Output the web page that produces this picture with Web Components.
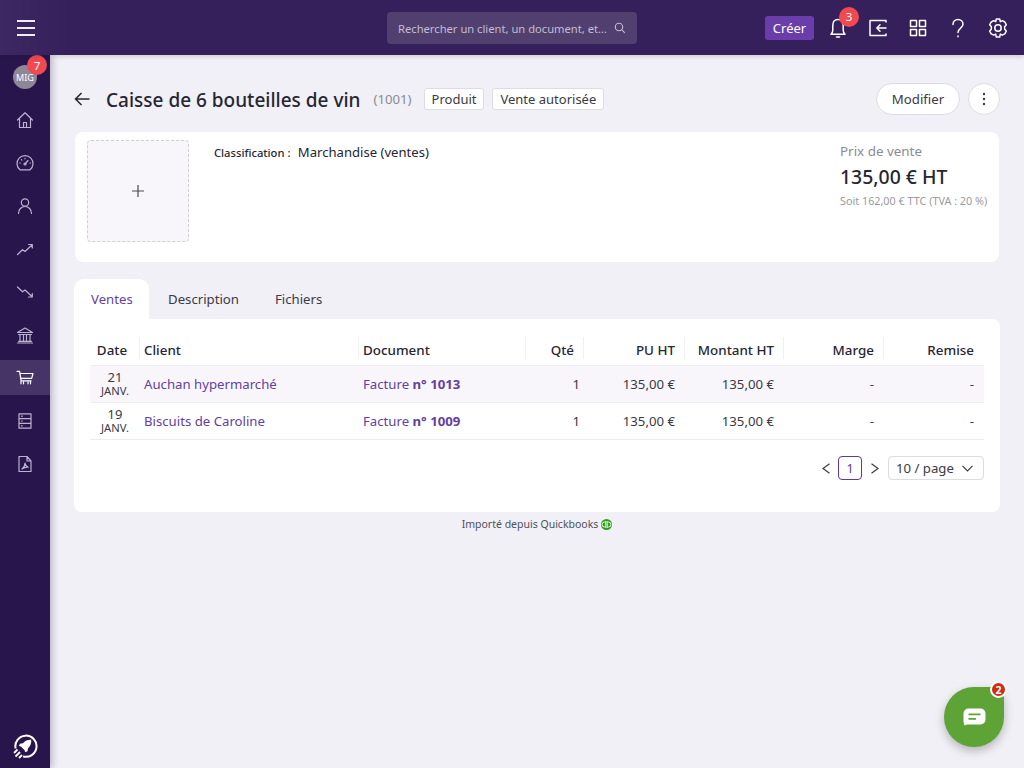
<!DOCTYPE html>
<html lang="fr">
<head>
<meta charset="utf-8">
<title>Caisse de 6 bouteilles de vin</title>
<style>
  html, body { margin: 0; height: 100%; }
  body {
    font-family: "Noto Sans", "Open Sans", sans-serif;
    color: #262632;
    background: #f0f0f6;
    overflow: hidden;
  }
  app-shell { width: 1024px; height: 768px; }
</style>
</head>
<body>
<app-shell>
  <app-topbar slot="top"></app-topbar>
  <app-sidebar slot="side"></app-sidebar>
  <page-header></page-header>
  <product-card></product-card>
  <product-tabs>
    <sales-table></sales-table>
  </product-tabs>
  <import-note></import-note>
  <chat-fab slot="over"></chat-fab>
</app-shell>

<script>
// Font stack shared by all the shadow roots
const FONT = `"Noto Sans", "Open Sans", sans-serif`;

class AppShell extends HTMLElement {
  constructor() {
    super();
    this.attachShadow({ mode: "open" });
    this.shadowRoot.innerHTML = `
      <style>
        :host {
          display: grid;
          grid-template-columns: 50px 1fr;
          grid-template-rows: 55px 1fr;
          position: relative;
          overflow: hidden;
        }
        .top { grid-column: 1 / 3; z-index: 3; }
        .side { z-index: 2; min-height: 0; }
        main { padding: 28px 24px 0 24px; min-width: 0; }
      </style>
      <div class="top"><slot name="top"></slot></div>
      <div class="side"><slot name="side"></slot></div>
      <main><slot></slot></main>
      <slot name="over"></slot>
    `;
  }
}

class AppTopbar extends HTMLElement {
  constructor() {
    super();
    this.attachShadow({ mode: "open" });
    this.shadowRoot.innerHTML = `
      <style>
        :host {
          display: flex;
          align-items: center;
          height: 55px;
          background: linear-gradient(90deg, #3e2864, #35205b 70px);
          box-shadow: 0 2px 4px rgba(40, 30, 70, 0.15);
          font-family: ${FONT};
          position: relative;
        }
        .burger {
          width: 52px;
          height: 55px;
          flex: none;
          display: flex;
          align-items: center;
          justify-content: center;
        }
        .search {
          position: absolute;
          left: 387px;
          top: 12px;
          width: 250px;
          height: 32px;
          border-radius: 4px;
          background: #51406f;
          color: #c4bccf;
          font-size: 11.2px;
          display: flex;
          align-items: center;
          padding: 0 11px;
          box-sizing: border-box;
          white-space: nowrap;
        }
        .search span { flex: 1; }
        .right {
          margin-left: auto;
          display: flex;
          align-items: center;
          padding-right: 15px;
        }
        .create {
          background: #6a3eaa;
          color: #fff;
          font-size: 13px;
          height: 24px;
          width: 49px;
          display: flex;
          align-items: center;
          justify-content: center;
          border-radius: 3px;
          margin-right: 13px;
        }
        .icon { width: 22px; height: 24px; display: block; }
        .bell { position: relative; width: 24px; height: 24px; margin-right: 16px; }
        .badge {
          position: absolute;
          left: 12px;
          top: -9px;
          width: 20px;
          height: 20px;
          border-radius: 50%;
          background: #f1494f;
          color: #fff;
          font-size: 11.5px;
          display: flex;
          align-items: center;
          justify-content: center;
        }
        .right svg { fill: none; stroke: #fff; stroke-width: 1.5; stroke-linecap: round; stroke-linejoin: round; }
        .gap { margin-right: 18px; }
      </style>
      <div class="burger">
        <svg width="18" height="16" viewBox="0 0 18 16"><path d="M0 1h18M0 8h18M0 15h18" stroke="#f1edf6" stroke-width="2"/></svg>
      </div>
      <div class="search">
        <span>Rechercher un client, un document, et...</span>
        <svg width="12" height="12" viewBox="0 0 12 12" fill="none" stroke="#c4bccf" stroke-width="1.1"><circle cx="5" cy="5" r="3.7"/><path d="M7.8 7.8l3 3"/></svg>
      </div>
      <div class="right">
        <div class="create">Créer</div>
        <div class="bell">
          <svg class="icon" viewBox="0 0 22 24"><path d="M11 3.5c-3.5 0-5.2 2.7-5.2 5.8v5c0 1.6-.8 3-1.8 3.900h14c-1-.9-1.800-2.300-1.800-3.900v-5c0-3.100-1.700-5.800-5.200-5.800zM9.500 21h3"/></svg>
          <div class="badge">3</div>
        </div>
        <svg class="icon gap" viewBox="0 0 22 24"><path d="M19 6V4.500H3v15h16V18M19 12H10M13 8.800L9.800 12l3.200 3.200"/></svg>
        <svg class="icon gap" viewBox="0 0 22 24"><path d="M3.500 4.500h6v6h-6zM12.500 4.500h6v6h-6zM3.500 13.500h6v6h-6zM12.500 13.500h6v6h-6z"/></svg>
        <svg class="icon gap" viewBox="0 0 22 24"><path d="M6 8.500c0-3 2.200-5 5-5s5 2 5 4.700c0 3.800-5 4-5 8.300M11 20v.8"/></svg>
        <svg class="icon" viewBox="0 0 22 24"><circle cx="11" cy="12" r="3.200"/><path d="M9.300 3h3.400l.6 2.700 2-1 2.500 1.300 1.500 2.700-1.700 2 .1 2.600 1.600 1.800-1.500 2.800-2.500 1.200-2-1-.6 2.900H9.300l-.6-2.900-2 1-2.500-1.200-1.500-2.800 1.600-1.800.1-2.600-1.700-2L4.200 6l2.500-1.300 2 1z"/></svg>
      </div>
    `;
  }
}

class AppSidebar extends HTMLElement {
  constructor() {
    super();
    this.attachShadow({ mode: "open" });
    const icons = [
      `<path d="M2.500 10L10 2.800 17.500 10M4.500 8.500V17.500h11V8.500M8.500 17.500v-5h3v5"/>`,
      `<path d="M5 16.800a8 8 0 1 1 10 0zM10 11l3-3.500M4.800 10h.5M10 5.300v.5M15 10h.5M6.500 6.700l.4.4"/><circle cx="10" cy="11" r="1"/>`,
      `<circle cx="10" cy="6.500" r="3.700"/><path d="M3.500 17.500c0-4 2.800-7 6.500-7s6.500 3 6.500 7"/>`,
      `<path d="M2.500 15.500l5-4.800 2.500 1.800 7-6.500M13.500 5.500h3.800v3.500"/>`,
      `<path d="M2.500 5l5 4.800L10 8l7 6.500M13.500 15h3.800v-3.500"/>`,
      `<path d="M2.500 7.500L10 3l7.500 4.500zM3.500 9.500h13M5 10v6M8.500 10v6M11.500 10v6M15 10v6M3.500 16.300h13M2.500 18h15"/>`,
      `<path d="M2 3.300h2.600l1.500 9.500h10M5 5.500h13l-1.300 4.800H5.800M6 13v2.800M8.500 14v1.800M13 14v1.800M15.500 13v2.800"/>`,
      `<path d="M4 2.800h12v14.400H4zM4 7.600h12M4 12.400h12M6.500 5.200h.8M6.500 10h.8M6.500 14.800h.8"/>`,
      `<path d="M4 2.500h8l4 4.500v10.500H4zM12 2.500V7h4M7 15c2-1.500 3-4 3-6 .4 2.500 1.500 3.600 3.200 4.200-2.200-.2-4.200.4-6.200 1.800z"/>`,
    ];
    const items = icons.map((p, i) => `
      <div class="item ${i === 6 ? "active" : ""}">
        <svg width="20" height="20" viewBox="0 0 20 20">${p}</svg>
      </div>`).join("");
    this.shadowRoot.innerHTML = `
      <style>
        :host {
          display: flex;
          flex-direction: column;
          align-items: stretch;
          width: 50px;
          height: 713px;
          background: #27154b;
          box-shadow: 2px 0 7px rgba(40, 30, 70, 0.3);
          font-family: ${FONT};
          position: relative;
        }
        .avatar-wrap { height: 43px; display: flex; justify-content: center; padding-top: 10px; box-sizing: border-box; }
        .avatar {
          width: 24px;
          height: 24px;
          border-radius: 50%;
          background: #8e8799;
          color: #fff;
          font-size: 9px;
          display: flex;
          align-items: center;
          justify-content: center;
          position: relative;
        }
        .count {
          position: absolute;
          left: 14px;
          top: -10px;
          width: 20px;
          height: 20px;
          border-radius: 50%;
          background: #f1494f;
          color: #fff;
          font-size: 11.500px;
          display: flex;
          align-items: center;
          justify-content: center;
        }
        .item {
          height: 43px;
          display: flex;
          align-items: center;
          justify-content: center;
        }
        .item svg { fill: none; stroke: #bdb2d1; stroke-width: 1.2; stroke-linecap: round; stroke-linejoin: round; }
        .item.active { background: #473467; height: 35px; margin: 4px 0; }
        .item.active svg { stroke: #fff; }
        .rocket { margin-top: auto; height: 35px; display: flex; justify-content: center; }
      </style>
      <div class="avatar-wrap"><div class="avatar">MIG<div class="count">7</div></div></div>
      ${items}
      <div class="rocket">
        <svg width="26" height="26" viewBox="0 0 26 26" fill="none">
          <path d="M3.600 15.500A10.600 10.600 0 1 1 11 23.400" stroke="#fff" stroke-width="2"/>
          <path d="M19.200 6.800c.4 3.600-.8 6.300-3.200 8.500l-.5 3-2.300 1-.6-2-3.700-3.700-2-.6 1-2.300 3-.5c2.200-2.400 4.900-3.600 8.300-3.400z" fill="#fff"/>
          <path d="M2 20l3.500-3.500M3.500 23.500l4.500-4.500M7 25l3-3" stroke="#fff" stroke-width="1.800"/>
        </svg>
      </div>
    `;
  }
}

class PageHeader extends HTMLElement {
  constructor() {
    super();
    this.attachShadow({ mode: "open" });
    this.shadowRoot.innerHTML = `
      <style>
        :host {
          display: flex;
          align-items: center;
          height: 32px;
          font-family: ${FONT};
          color: #262632;
        }
        .back { margin-right: 15px; flex: none; display: block; }
        h1 { font-size: 19px; font-weight: 500; margin: 1px 13px 0 0; white-space: nowrap; }
        .ref { font-size: 13.200px; color: #8b8b94; margin-right: 12px; }
        .tag {
          font-size: 13px;
          height: 22px;
          box-sizing: border-box;
          display: flex;
          align-items: center;
          padding: 0 7px;
          background: #fff;
          border: 1px solid #dcdce2;
          border-radius: 3px;
          margin-right: 8px;
          color: #3a3a44;
        }
        .actions { margin-left: auto; display: flex; gap: 8px; }
        button {
          font: inherit;
          font-size: 13.200px;
          height: 32px;
          border: 1px solid #dcdce2;
          background: #fff;
          color: #3a3a44;
          border-radius: 16px;
          padding: 0;
          display: flex;
          align-items: center;
          justify-content: center;
        }
        .edit { width: 84px; }
        .more { width: 32px; }
      </style>
      <svg class="back" width="17" height="16" viewBox="0 0 17 16" fill="none" stroke="#262632" stroke-width="1.500"><path d="M15.500 8H1.500M7.500 2l-6 6 6 6"/></svg>
      <h1>Caisse de 6 bouteilles de vin</h1>
      <span class="ref">(1001)</span>
      <span class="tag">Produit</span>
      <span class="tag">Vente autorisée</span>
      <div class="actions">
        <button class="edit">Modifier</button>
        <button class="more"><svg width="4" height="14" viewBox="0 0 4 14" fill="#3a3a44"><circle cx="2" cy="2" r="1.200"/><circle cx="2" cy="7" r="1.200"/><circle cx="2" cy="12" r="1.200"/></svg></button>
      </div>
    `;
  }
}

class ProductCard extends HTMLElement {
  constructor() {
    super();
    this.attachShadow({ mode: "open" });
    this.shadowRoot.innerHTML = `
      <style>
        :host {
          display: flex;
          height: 130px;
          width: 924px;
          margin: 17px 0 0 1px;
          padding: 8px 12px;
          box-sizing: border-box;
          background: #fff;
          border-radius: 8px;
          font-family: ${FONT};
          color: #262632;
        }
        .pic {
          width: 102px;
          height: 102px;
          flex: none;
          box-sizing: border-box;
          border: 1px dashed #cfcfd6;
          border-radius: 4px;
          background: #f8f6fb;
          display: flex;
          align-items: center;
          justify-content: center;
        }
        .info { flex: 1; padding: 4px 0 0 25px; font-size: 13.100px; line-height: 17px; }
        .info b { font-size: 11.200px; font-weight: 500; margin-right: 4px; }
        .price { width: 147px; flex: none; }
        .label { font-size: 13.400px; color: #8b8b94; margin-top: 3px; line-height: 17px; }
        .amount { font-size: 19.400px; font-weight: 500; line-height: 26px; margin-top: 4px; white-space: nowrap; }
        .vat { font-size: 10.800px; color: #9a9aa2; margin-top: 4px; white-space: nowrap; line-height: 14px; }
      </style>
      <div class="pic"><svg width="12" height="12" viewBox="0 0 12 12" stroke="#4a4a54" stroke-width="1.200"><path d="M6 0v12M0 6h12"/></svg></div>
      <div class="info"><b>Classification :</b> Marchandise (ventes)</div>
      <div class="price">
        <div class="label">Prix de vente</div>
        <div class="amount">135,00 € HT</div>
        <div class="vat">Soit 162,00 € TTC (TVA : 20 %)</div>
      </div>
    `;
  }
}

class ProductTabs extends HTMLElement {
  constructor() {
    super();
    this.attachShadow({ mode: "open" });
    this.shadowRoot.innerHTML = `
      <style>
        :host {
          display: block;
          width: 926px;
          margin-top: 17px;
          font-family: ${FONT};
        }
        nav { display: flex; height: 40px; font-size: 13.200px; color: #3a3a44; }
        .tab { display: flex; align-items: center; padding: 0 18px; }
        .tab.on { background: #fff; color: #63409f; border-radius: 10px 10px 0 0; width: 75px; padding: 0 0 0 17px; box-sizing: border-box; margin-right: 1px; }
        .panel { background: #fff; border-radius: 0 8px 8px 8px; height: 193px; padding: 12px 16px 0 16px; box-sizing: border-box; }
      </style>
      <nav>
        <div class="tab on">Ventes</div>
        <div class="tab">Description</div>
        <div class="tab">Fichiers</div>
      </nav>
      <div class="panel"><slot></slot></div>
    `;
  }
}

class SalesTable extends HTMLElement {
  constructor() {
    super();
    this.attachShadow({ mode: "open" });
    const rows = [
      ["21", "Auchan hypermarché", "1013"],
      ["19", "Biscuits de Caroline", "1009"],
    ];
    const body = rows.map(r => `
      <tr>
        <td class="date"><div>${r[0]}</div><small>JANV.</small></td>
        <td class="link">${r[1]}</td>
        <td class="link">Facture <b>n° ${r[2]}</b></td>
        <td class="num qty">1</td>
        <td class="num">135,00 €</td>
        <td class="num">135,00 €</td>
        <td class="num">-</td>
        <td class="num">-</td>
      </tr>`).join("");
    this.shadowRoot.innerHTML = `
      <style>
        :host { display: block; font-family: ${FONT}; color: #3a3a44; }
        table { border-collapse: collapse; table-layout: fixed; width: 894px; font-size: 13.200px; }
        th { font-size: 13.400px; font-weight: 500; color: #262632; height: 30px; padding: 4px 10px 0 4px; text-align: left; position: relative; white-space: nowrap; }
        th.num { text-align: right; }
        th + th::before {
          content: "";
          position: absolute;
          left: -1px;
          top: 6px;
          bottom: 6px;
          width: 1px;
          background: #f0f0f4;
        }
        th:first-child { text-align: center; padding: 4px 6px 0 0; }
        td { height: 36px; padding: 0 10px 0 4px; border-bottom: 1px solid #ececf1; white-space: nowrap; }
        tbody tr:first-child td { background: #f8f6fb; }
        thead th { border-bottom: 1px solid #ececf1; }
        td.num { text-align: right; }
        td.qty { padding-right: 4px; }
        td.link { color: #63409f; }
        td.link b { font-weight: 700; }
        td.date { text-align: center; padding: 0; }
        td.date div { line-height: 14px; font-size: 13px; }
        td.date small { font-size: 11.200px; display: block; line-height: 14px; }
        .pager { display: flex; justify-content: flex-end; align-items: center; margin-top: 16px; font-size: 13.200px; color: #3a3a44; }
        .cur {
          width: 24px;
          height: 24px;
          box-sizing: border-box;
          border: 1px solid #60399f;
          border-radius: 4px;
          color: #60399f;
          display: flex;
          align-items: center;
          justify-content: center;
          margin: 0 9px 0 8px;
          font-size: 12.500px;
        }
        .size {
          width: 96px;
          height: 24px;
          box-sizing: border-box;
          border: 1px solid #dcdce2;
          border-radius: 4px;
          margin-left: 9px;
          display: flex;
          align-items: center;
          justify-content: space-between;
          padding: 0 10px 0 7px;
        }
        svg { display: block; fill: none; stroke: #3a3a44; stroke-width: 1.200; }
      </style>
      <table>
        <colgroup>
          <col style="width:50px"><col style="width:219px"><col style="width:167px"><col style="width:58px">
          <col style="width:101px"><col style="width:99px"><col style="width:100px"><col style="width:100px">
        </colgroup>
        <thead>
          <tr><th>Date</th><th>Client</th><th>Document</th><th class="num">Qté</th><th class="num">PU HT</th><th class="num">Montant HT</th><th class="num">Marge</th><th class="num">Remise</th></tr>
        </thead>
        <tbody>${body}</tbody>
      </table>
      <div class="pager">
        <svg width="8" height="11" viewBox="0 0 8 11"><path d="M7.500 .8L1 5.500l6.500 4.700"/></svg>
        <div class="cur">1</div>
        <svg width="8" height="11" viewBox="0 0 8 11"><path d="M.5 .8L7 5.500 .5 10.200"/></svg>
        <div class="size">10 / page <svg width="11" height="7" viewBox="0 0 11 7"><path d="M.5 .8L5.500 6l5-5.200"/></svg></div>
      </div>
    `;
  }
}

class ImportNote extends HTMLElement {
  constructor() {
    super();
    this.attachShadow({ mode: "open" });
    this.shadowRoot.innerHTML = `
      <style>
        :host {
          display: flex;
          justify-content: center;
          align-items: center;
          gap: 3px;
          width: 926px;
          height: 24px;
          font-family: ${FONT};
          font-size: 10.500px;
          color: #50505a;
        }
      </style>
      Importé depuis Quickbooks
      <svg width="11" height="11" viewBox="0 0 11 11"><circle cx="5.500" cy="5.500" r="5.500" fill="#2ca01c"/><path d="M4.500 3H3.600a2.500 2.500 0 0 0 0 5h.4M4.800 2v7M6.500 8h.9a2.500 2.500 0 0 0 0-5H7M6.200 2v7" fill="none" stroke="#fff" stroke-width=".9"/></svg>
    `;
  }
}

class ChatFab extends HTMLElement {
  constructor() {
    super();
    this.attachShadow({ mode: "open" });
    this.shadowRoot.innerHTML = `
      <style>
        :host {
          position: absolute;
          left: 944px;
          top: 687px;
          width: 60px;
          height: 60px;
          font-family: ${FONT};
          z-index: 4;
        }
        .bubble {
          width: 60px;
          height: 60px;
          background: #5da336;
          border-radius: 50% 12px 50% 50%;
          box-shadow: 0 4px 10px rgba(0, 0, 0, 0.25);
          display: flex;
          align-items: center;
          justify-content: center;
        }
        .badge {
          position: absolute;
          right: -3px;
          top: -6px;
          width: 13px;
          height: 13px;
          border: 2px solid #fff;
          border-radius: 50%;
          background: #cf2c10;
          color: #fff;
          font-size: 10.500px;
          font-weight: 700;
          display: flex;
          align-items: center;
          justify-content: center;
        }
      </style>
      <div class="bubble">
        <svg width="23" height="18" viewBox="0 0 23 18"><path d="M5.500 .5h12a5 5 0 0 1 5 5v6a5 5 0 0 1-5 5H4L1.500 17.500 .5 14V5.500a5 5 0 0 1 5-5z" fill="#fff"/><path d="M5.500 6.300h12M5.500 10.800h7.500" stroke="#5da336" stroke-width="1.800"/></svg>
      </div>
      <div class="badge">2</div>
    `;
  }
}

customElements.define("app-shell", AppShell);
customElements.define("app-topbar", AppTopbar);
customElements.define("app-sidebar", AppSidebar);
customElements.define("page-header", PageHeader);
customElements.define("product-card", ProductCard);
customElements.define("product-tabs", ProductTabs);
customElements.define("sales-table", SalesTable);
customElements.define("import-note", ImportNote);
customElements.define("chat-fab", ChatFab);
</script>
</body>
</html>
